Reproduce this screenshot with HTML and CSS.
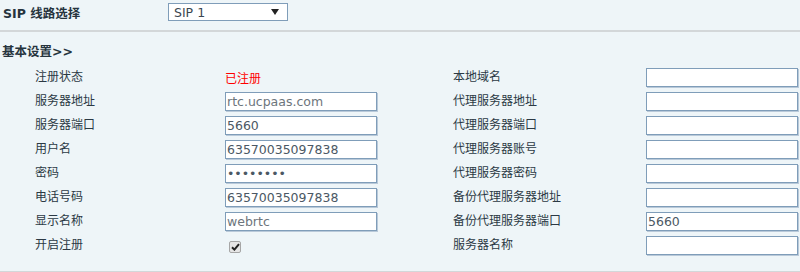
FILE: index.html
```html
<!DOCTYPE html>
<html lang="zh-CN">
<head>
    <meta charset="UTF-8">
    <title>SIP 设置</title>
    <link rel="stylesheet" href="styles.css">
</head>

<body>
<div class="line-select">
    <div class="title">SIP 线路选择</div>
    <div class="select">
        <span>SIP 1</span>
        <span class="arrow"></span>
    </div>
</div>
<div class="divider"></div>

<div class="section-title">基本设置&gt;&gt;</div>

<div class="form">
    <div class="label">注册状态</div>
    <div class="status">已注册</div>
    <div></div>
    <div class="label">本地域名</div>
    <input class="field" type="text" value="">

    <div class="label">服务器地址</div>
    <input class="field muted" type="text" value="rtc.ucpaas.com">
    <div></div>
    <div class="label">代理服务器地址</div>
    <input class="field" type="text" value="">

    <div class="label">服务器端口</div>
    <input class="field" type="text" value="5660">
    <div></div>
    <div class="label">代理服务器端口</div>
    <input class="field" type="text" value="">

    <div class="label">用户名</div>
    <input class="field" type="text" value="63570035097838">
    <div></div>
    <div class="label">代理服务器账号</div>
    <input class="field" type="text" value="">

    <div class="label">密码</div>
    <input class="field" type="password" value="12345678">
    <div></div>
    <div class="label">代理服务器密码</div>
    <input class="field" type="password" value="">

    <div class="label">电话号码</div>
    <input class="field" type="text" value="63570035097838">
    <div></div>
    <div class="label">备份代理服务器地址</div>
    <input class="field" type="text" value="">

    <div class="label">显示名称</div>
    <input class="field muted" type="text" value="webrtc">
    <div></div>
    <div class="label">备份代理服务器端口</div>
    <input class="field" type="text" value="5660">

    <div class="label">开启注册</div>
    <div>
        <span class="check">
            <svg width="9" height="8" viewBox="0 0 9 8">
                <path d="M1 4.2 L3.4 6.6 L8 1.2" fill="none" stroke="#222" stroke-width="2"/>
            </svg>
        </span>
    </div>
    <div></div>
    <div class="label">服务器名称</div>
    <input class="field" type="text" value="">
</div>

<div class="divider bottom"></div>
</body>
</html>
```

FILE: styles.css
```css
body {
    margin: 0;
    background: #eef5f8;
    color: #2b3944;
    font-family: "DejaVu Sans", "Noto Sans CJK SC", sans-serif;
    font-size: 12px;
}

.line-select {
    display: flex;
    align-items: center;
    height: 18px;
    padding: 3px 0 9px 3px;
}

.title {
    width: 165px;
    font-weight: bold;
    font-size: 12.5px;
    color: #26343e;
}

.select {
    box-sizing: border-box;
    display: flex;
    align-items: center;
    justify-content: space-between;
    width: 120px;
    height: 18px;
    padding: 0 8px 0 5px;
    background: #fff;
    border: 1px solid #7f9db9;
    color: #3a4650;
    font-size: 12.5px;
}

.arrow {
    width: 0;
    height: 0;
    border-left: 4px solid transparent;
    border-right: 4px solid transparent;
    border-top: 6px solid #222;
}

.divider {
    height: 2px;
    background: #d3d7d9;
}

.divider.bottom {
    margin-top: 16px;
}

.section-title {
    font-weight: bold;
    font-size: 12.5px;
    padding: 9px 0 0 2px;
    height: 18px;
    color: #26343e;
}

.form {
    display: grid;
    grid-template-columns: 190px 152px 76px 193px 152px;
    grid-auto-rows: 19px;
    row-gap: 5px;
    align-items: center;
    padding: 9px 0 0 35px;
}

.label {
    line-height: 19px;
}

.status {
    color: #f00;
}

.field {
    box-sizing: border-box;
    width: 152px;
    height: 19px;
    margin: 0;
    padding: 0 1px;
    background: #fff;
    border: 1px solid #7f9db9;
    box-shadow: 1px 1px 0 #b9c9d9;
    font-family: "DejaVu Sans", sans-serif;
    font-size: 12.5px;
    color: #4b5864;
    outline: none;
}

.field.muted {
    color: #6d757c;
}

.check {
    display: inline-flex;
    align-items: center;
    justify-content: center;
    box-sizing: border-box;
    width: 12px;
    height: 12px;
    margin: 3px 0 0 4px;
    background: #e6e6e6;
    border: 1px solid #a6a6a6;
    border-radius: 2px;
}
```
